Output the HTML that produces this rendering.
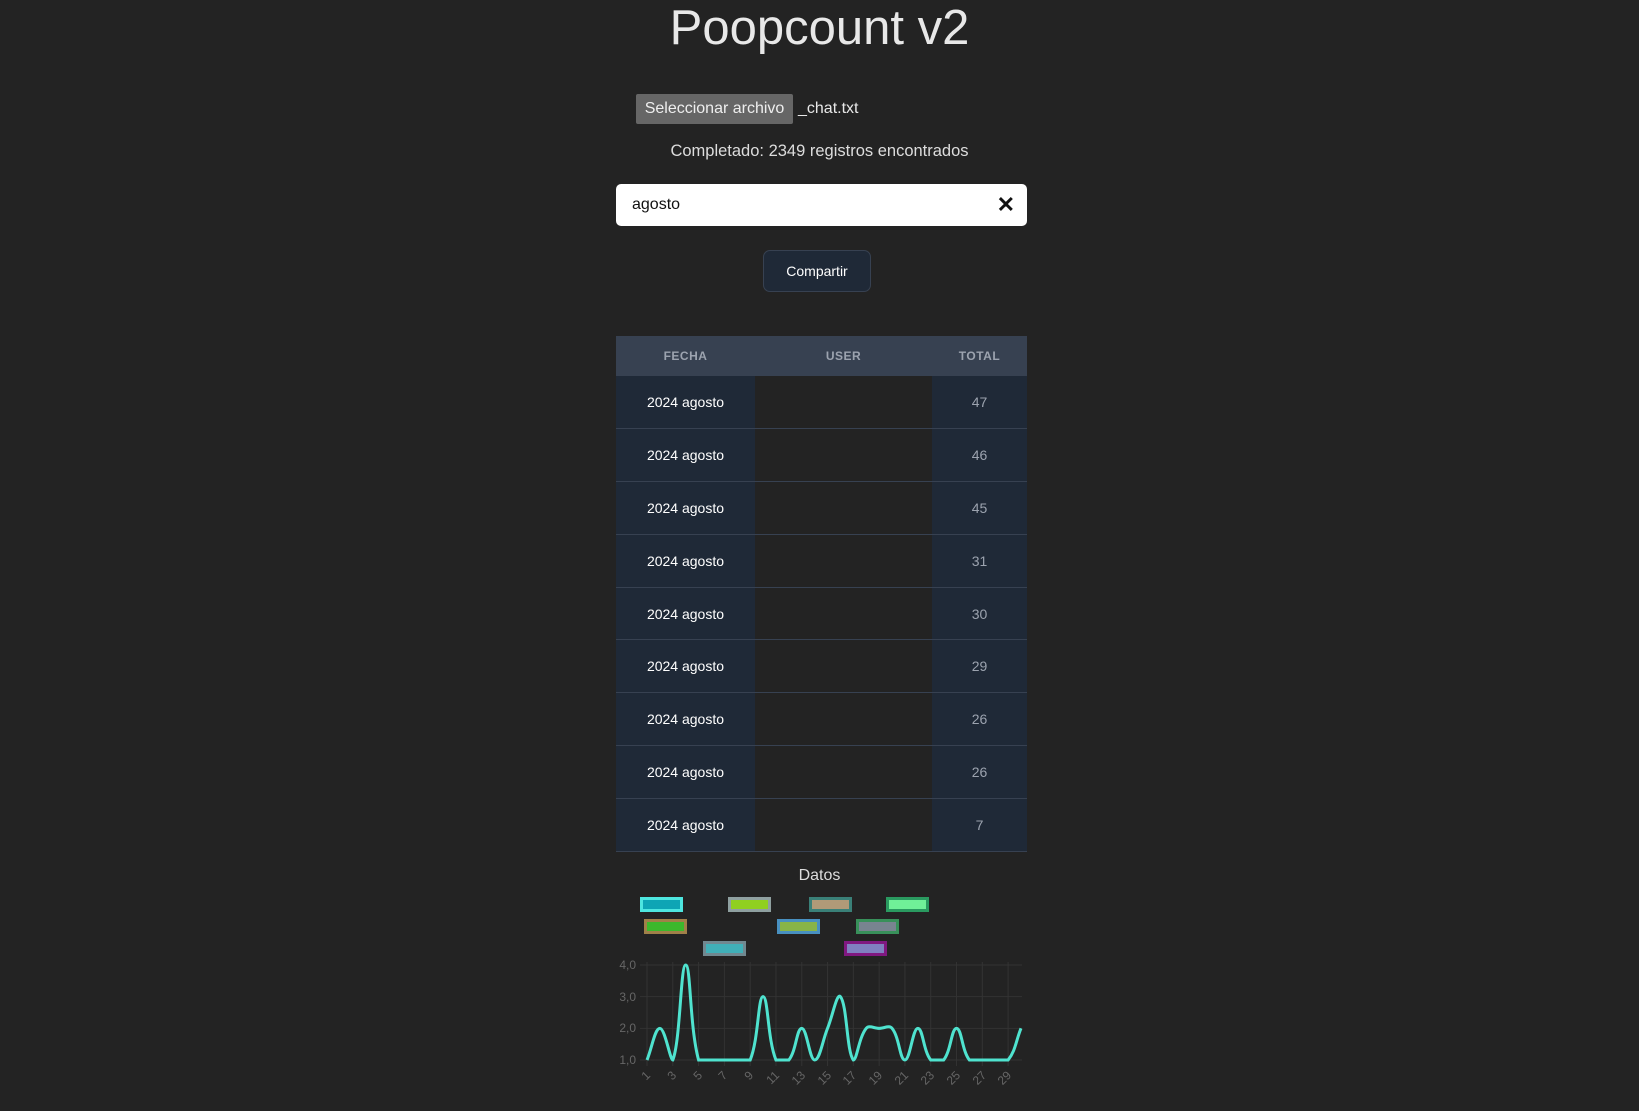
<!DOCTYPE html>
<html><head><meta charset="utf-8"><style>
*{box-sizing:border-box;margin:0;padding:0}
body{width:1639px;height:1111px;background:#232323;font-family:"Liberation Sans",sans-serif;color:#e5e5e5;position:relative;overflow:hidden}
.abs{position:absolute}
h1{position:absolute;left:0;width:1639px;top:0px;text-align:center;font-weight:300;font-size:49px;color:#e8e8e8}
.fbtn{left:636px;top:94px;width:157px;height:30px;background:#666;color:#eee;font-size:16px;line-height:30px;text-align:center;border-radius:2px}
.fname{left:798px;top:94px;line-height:30px;font-size:16px;color:#e8e8e8}
.status{left:0;width:1639px;top:142px;text-align:center;font-size:16.5px;color:#ddd}
.inp{left:616px;top:184px;width:411px;height:42px;background:#fff;border-radius:5px;color:#111;font-size:16px;line-height:42px;padding-left:16px}
.x{position:absolute;right:12px;top:0;font-size:22px;font-weight:bold;color:#111}
.share{left:763px;top:250px;width:108px;height:42px;background:#1f2937;border:1px solid #374151;border-radius:7px;color:#fff;font-size:14px;line-height:40px;text-align:center}
table{position:absolute;left:616px;top:336px;width:411px;border-collapse:collapse}
th{background:#374151;color:#9ca3af;font-size:12px;font-weight:bold;height:40px;letter-spacing:.5px}
td{height:52.8px;border-bottom:1px solid #374151;font-size:14px;text-align:center}
td.f{background:#1f2937;color:#fff;width:139px}
td.u{background:#232323;width:177px}
td.t{background:#1f2937;color:#9ca3af}
.datos{left:0;width:1639px;top:867px;text-align:center;font-size:16px;color:#ddd}
.lg{position:absolute;width:43px;height:15px;border:3px solid}
</style></head><body>
<h1>Poopcount v2</h1>
<div class="abs fbtn">Seleccionar archivo</div>
<div class="abs fname">_chat.txt</div>
<div class="abs status">Completado: 2349 registros encontrados</div>
<div class="abs inp">agosto<span class="x">✕</span></div>
<div class="abs share">Compartir</div>
<table>
<tr><th>FECHA</th><th>USER</th><th>TOTAL</th></tr>
<tr><td class="f">2024 agosto</td><td class="u"></td><td class="t">47</td></tr>
<tr><td class="f">2024 agosto</td><td class="u"></td><td class="t">46</td></tr>
<tr><td class="f">2024 agosto</td><td class="u"></td><td class="t">45</td></tr>
<tr><td class="f">2024 agosto</td><td class="u"></td><td class="t">31</td></tr>
<tr><td class="f">2024 agosto</td><td class="u"></td><td class="t">30</td></tr>
<tr><td class="f">2024 agosto</td><td class="u"></td><td class="t">29</td></tr>
<tr><td class="f">2024 agosto</td><td class="u"></td><td class="t">26</td></tr>
<tr><td class="f">2024 agosto</td><td class="u"></td><td class="t">26</td></tr>
<tr><td class="f">2024 agosto</td><td class="u"></td><td class="t">7</td></tr>
</table>
<div class="abs datos">Datos</div>
<div class="lg" style="left:640px;top:897px;background:#0ea5b5;border-color:#4ee6e0"></div>
<div class="lg" style="left:728px;top:897px;background:#90d020;border-color:#8fa0a0"></div>
<div class="lg" style="left:809px;top:897px;background:#b09a78;border-color:#3a8078"></div>
<div class="lg" style="left:886px;top:897px;background:#70f098;border-color:#2a9a60"></div>
<div class="lg" style="left:644px;top:919px;background:#3cb82c;border-color:#a08048"></div>
<div class="lg" style="left:777px;top:919px;background:#88b448;border-color:#4890c0"></div>
<div class="lg" style="left:856px;top:919px;background:#788490;border-color:#38905a"></div>
<div class="lg" style="left:703px;top:941px;background:#40b0b8;border-color:#708890"></div>
<div class="lg" style="left:844px;top:941px;background:#8080c0;border-color:#801880"></div>
<svg class="abs" style="left:0;top:0" width="1639" height="1111" id="ch">
<g id="grid" stroke="#333" stroke-width="1"></g>
<g fill="#666" font-size="12" font-family="Liberation Sans,sans-serif" text-anchor="end">
<text x="636" y="969">4,0</text><text x="636" y="1001">3,0</text><text x="636" y="1032">2,0</text><text x="636" y="1064">1,0</text>
</g>
<g fill="#666" font-size="12" font-family="Liberation Sans,sans-serif" text-anchor="end" id="xl">
<text transform="translate(651,1076) rotate(-45)">1</text>
<text transform="translate(677,1076) rotate(-45)">3</text>
<text transform="translate(703,1076) rotate(-45)">5</text>
<text transform="translate(728,1076) rotate(-45)">7</text>
<text transform="translate(754,1076) rotate(-45)">9</text>
<text transform="translate(780,1076) rotate(-45)">11</text>
<text transform="translate(806,1076) rotate(-45)">13</text>
<text transform="translate(832,1076) rotate(-45)">15</text>
<text transform="translate(857,1076) rotate(-45)">17</text>
<text transform="translate(883,1076) rotate(-45)">19</text>
<text transform="translate(909,1076) rotate(-45)">21</text>
<text transform="translate(935,1076) rotate(-45)">23</text>
<text transform="translate(961,1076) rotate(-45)">25</text>
<text transform="translate(987,1076) rotate(-45)">27</text>
<text transform="translate(1012,1076) rotate(-45)">29</text>
</g>
<path id="ln" fill="none" stroke="#4fe3cf" stroke-width="3"/>
</svg>
<script>
var d=[1,2,1,4,1,1,1,1,1,3,1,1,2,1,2,3,1,2,2,2,1,2,1,1,2,1,1,1,1,2];
var X=function(i){return 647+i*374/29},Y=function(v){return 1060-(v-1)*31.67};
var g=document.getElementById('grid'),s='';
for(var i=0;i<30;i+=2){s+='<line x1="'+X(i)+'" y1="962" x2="'+X(i)+'" y2="1066"/>';}
for(var v=1;v<=4;v++){s+='<line x1="640" y1="'+Y(v)+'" x2="1022" y2="'+Y(v)+'"/>';}
g.innerHTML=s;
var P=d.map(function(v,i){return [X(i),Y(v)]}),t=0.4,cp=[];
for(var i=0;i<P.length;i++){
 var pr=P[i-1]||P[i],c=P[i],nx=P[i+1]||P[i];
 var d01=Math.hypot(c[0]-pr[0],c[1]-pr[1]),d12=Math.hypot(nx[0]-c[0],nx[1]-c[1]);
 var s01=d01/(d01+d12||1),s12=d12/(d01+d12||1);
 if(isNaN(s01))s01=0;if(isNaN(s12))s12=0;
 var fa=t*s01,fb=t*s12;
 cp.push({p:[c[0]-fa*(nx[0]-pr[0]),c[1]-fa*(nx[1]-pr[1])],n:[c[0]+fb*(nx[0]-pr[0]),c[1]+fb*(nx[1]-pr[1])]});
}
for(var i=0;i<P.length;i++){cp[i].p[1]=Math.min(1060,Math.max(965,cp[i].p[1]));cp[i].n[1]=Math.min(1060,Math.max(965,cp[i].n[1]));}
var p='M'+P[0][0]+' '+P[0][1];
for(var i=1;i<P.length;i++){p+=' C'+cp[i-1].n[0]+' '+cp[i-1].n[1]+' '+cp[i].p[0]+' '+cp[i].p[1]+' '+P[i][0]+' '+P[i][1];}
document.getElementById('ln').setAttribute('d',p);
</script>
</body></html>
